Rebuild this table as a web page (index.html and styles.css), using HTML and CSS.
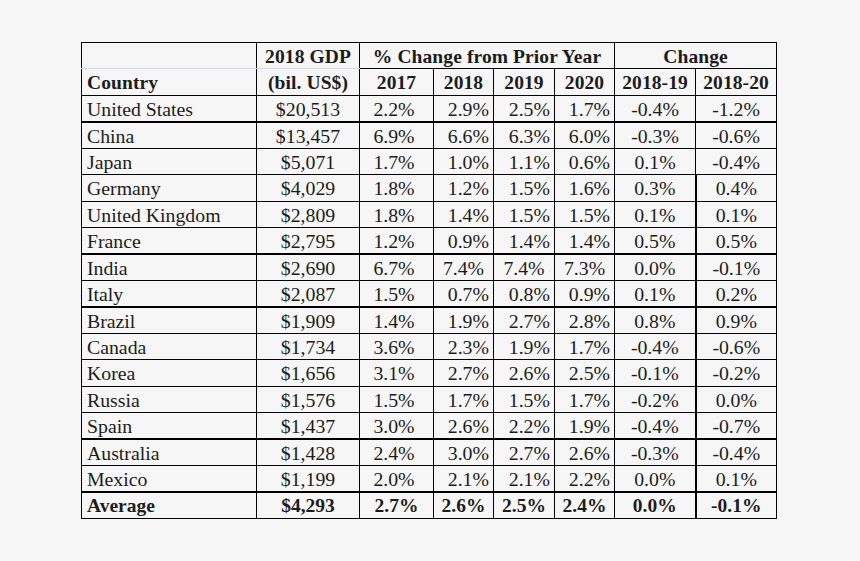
FILE: index.html
```html
<!DOCTYPE html>
<html>
<head>
<meta charset="utf-8">
<link rel="stylesheet" href="styles.css">
</head>
<body>
<div class="wrap">
<table class="gdp">
  <colgroup>
    <col class="c-country"><col class="c-gdp"><col class="c-y17"><col class="c-y18"><col class="c-y19"><col class="c-y20"><col class="c-ch"><col class="c-ch2">
  </colgroup>
  <thead>
    <tr class="top">
      <th class="hl"></th>
      <th class="hl">2018 GDP</th>
      <th colspan="4">% Change from Prior Year</th>
      <th colspan="2">Change</th>
    </tr>
    <tr>
      <th class="left">Country</th>
      <th>(bil. US$)</th>
      <th>2017</th><th>2018</th><th>2019</th><th>2020</th>
      <th>2018-19</th><th>2018-20</th>
    </tr>
  </thead>
  <tbody>
    <tr><td class="left">United States</td><td>$20,513</td><td class="y17">2.2%</td><td class="r">2.9%</td><td class="r">2.5%</td><td class="r">1.7%</td><td>-0.4%</td><td>-1.2%</td></tr>
    <tr class="sep"><td class="left">China</td><td>$13,457</td><td class="y17">6.9%</td><td class="r">6.6%</td><td class="r">6.3%</td><td class="r">6.0%</td><td>-0.3%</td><td>-0.6%</td></tr>
    <tr><td class="left">Japan</td><td>$5,071</td><td class="y17">1.7%</td><td class="r">1.0%</td><td class="r">1.1%</td><td class="r">0.6%</td><td>0.1%</td><td>-0.4%</td></tr>
    <tr class="tk"><td class="left">Germany</td><td>$4,029</td><td class="y17">1.8%</td><td class="r">1.2%</td><td class="r">1.5%</td><td class="r">1.6%</td><td>0.3%</td><td>0.4%</td></tr>
    <tr class="tk"><td class="left">United Kingdom</td><td>$2,809</td><td class="y17">1.8%</td><td class="r">1.4%</td><td class="r">1.5%</td><td class="r">1.5%</td><td>0.1%</td><td>0.1%</td></tr>
    <tr class="tk"><td class="left">France</td><td>$2,795</td><td class="y17">1.2%</td><td class="r">0.9%</td><td class="r">1.4%</td><td class="r">1.4%</td><td>0.5%</td><td>0.5%</td></tr>
    <tr class="sep tk"><td class="left">India</td><td>$2,690</td><td class="y17">6.7%</td><td>7.4%</td><td>7.4%</td><td>7.3%</td><td>0.0%</td><td>-0.1%</td></tr>
    <tr class="tk"><td class="left">Italy</td><td>$2,087</td><td class="y17">1.5%</td><td class="r">0.7%</td><td class="r">0.8%</td><td class="r">0.9%</td><td>0.1%</td><td>0.2%</td></tr>
    <tr class="sep tk"><td class="left">Brazil</td><td>$1,909</td><td class="y17">1.4%</td><td class="r">1.9%</td><td class="r">2.7%</td><td class="r">2.8%</td><td>0.8%</td><td>0.9%</td></tr>
    <tr class="tk"><td class="left">Canada</td><td>$1,734</td><td class="y17">3.6%</td><td class="r">2.3%</td><td class="r">1.9%</td><td class="r">1.7%</td><td>-0.4%</td><td>-0.6%</td></tr>
    <tr class="tk"><td class="left">Korea</td><td>$1,656</td><td class="y17">3.1%</td><td class="r">2.7%</td><td class="r">2.6%</td><td class="r">2.5%</td><td>-0.1%</td><td>-0.2%</td></tr>
    <tr class="tk"><td class="left">Russia</td><td>$1,576</td><td class="y17">1.5%</td><td class="r">1.7%</td><td class="r">1.5%</td><td class="r">1.7%</td><td>-0.2%</td><td>0.0%</td></tr>
    <tr class="tk"><td class="left">Spain</td><td>$1,437</td><td class="y17">3.0%</td><td class="r">2.6%</td><td class="r">2.2%</td><td class="r">1.9%</td><td>-0.4%</td><td>-0.7%</td></tr>
    <tr class="sep tk"><td class="left">Australia</td><td>$1,428</td><td class="y17">2.4%</td><td class="r">3.0%</td><td class="r">2.7%</td><td class="r">2.6%</td><td>-0.3%</td><td>-0.4%</td></tr>
    <tr class="tk"><td class="left">Mexico</td><td>$1,199</td><td class="y17">2.0%</td><td class="r">2.1%</td><td class="r">2.1%</td><td class="r">2.2%</td><td>0.0%</td><td>0.1%</td></tr>
    <tr class="sep tk avg"><td class="left">Average</td><td>$4,293</td><td>2.7%</td><td>2.6%</td><td>2.5%</td><td>2.4%</td><td>0.0%</td><td>-0.1%</td></tr>
  </tbody>
</table>
</div>
</body>
</html>
```

FILE: styles.css
```css
html, body {
  margin: 0;
  padding: 0;
  background: #f6f6f6;
}

.wrap {
  padding: 42px 0 0 81px;
}

.gdp {
  border-collapse: collapse;
  table-layout: fixed;
  width: 695px;
  font-family: "Liberation Serif", "Times New Roman", serif;
  color: #1c1c1c;
  background: #f6f6f6;
}

.c-country { width: 175px; }
.c-gdp { width: 103px; }
.c-y17 { width: 74px; }
.c-y18 { width: 60px; }
.c-y19 { width: 61px; }
.c-y20 { width: 60px; }
.c-ch { width: 81px; }
.c-ch2 { width: 81px; }

.gdp tr {
  height: 26.45px;
}

.gdp th,
.gdp td {
  border: 1px solid #000;
  padding: 1px 2px 0;
  text-align: center;
  vertical-align: middle;
  white-space: nowrap;
  line-height: 20px;
}

.gdp th {
  font-size: 19.5px;
  font-weight: bold;
  letter-spacing: 0.1px;
}

.gdp tr.top th {
  padding-top: 3px;
}

.gdp td {
  font-size: 19.8px;
  font-weight: normal;
}

.gdp th.hl {
  border-bottom-color: #cfd8e8;
}

.gdp .left {
  text-align: left;
  padding-left: 5px;
}

.gdp td.r {
  text-align: right;
  padding-right: 4px;
}

.gdp td.y17 {
  padding-right: 7px;
}

.gdp tr.sep td {
  border-top: 2px solid #000;
}

.gdp tr.tk td:last-child {
  border-left: 2px solid #000;
}

.gdp tr.avg td {
  font-weight: bold;
  font-size: 19.5px;
}
```
